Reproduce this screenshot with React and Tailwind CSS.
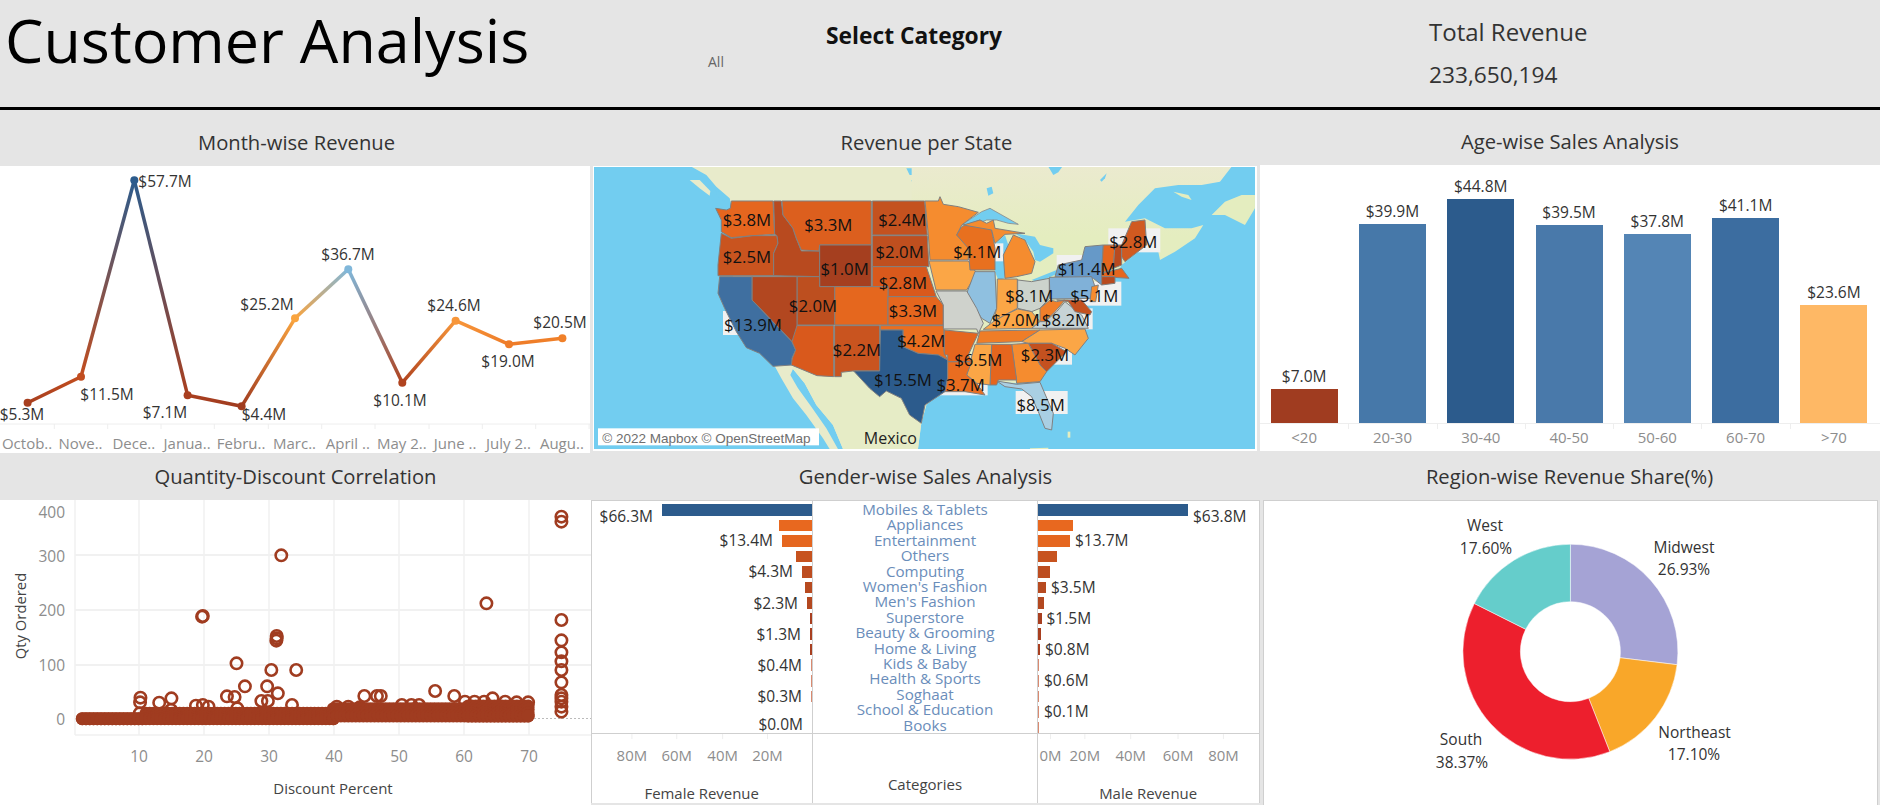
import React from "react";

const T = ({ x, y, children, size = 15.5, fill = "#333", anchor = "middle", ...rest }) => (
  <text x={x} y={y} fontSize={size} fill={fill} textAnchor={anchor} dominantBaseline="central" {...rest}>{children}</text>
);

const Title = ({ children, h }) => (
  <div className={`${h} flex items-center justify-center text-[20.2px] text-[#333] shrink-0`}>{children}</div>
);

/* ---------- Line chart ---------- */
const months = [
  { p: [27.6, 402.7], c: "#a83f1f", tick: "Octob..", l: "$5.3M", lp: [22, 414] },
  { p: [81, 376.7], c: "#c24d1f", tick: "Nove..", l: "$11.5M", lp: [107, 394] },
  { p: [134.3, 180.3], c: "#2c5b8c", tick: "Dece..", l: "$57.7M", lp: [165, 181] },
  { p: [187.6, 395.3], c: "#a93f1f", tick: "Janua..", l: "$7.1M", lp: [165, 412] },
  { p: [241.6, 406.3], c: "#a03c20", tick: "Febru..", l: "$4.4M", lp: [264, 414] },
  { p: [295, 318.3], c: "#f9a43f", tick: "Marc..", l: "$25.2M", lp: [267, 304] },
  { p: [348.3, 269.3], c: "#80b7da", tick: "April ..", l: "$36.7M", lp: [348, 254] },
  { p: [402.3, 382.7], c: "#b0431f", tick: "May 2..", l: "$10.1M", lp: [400, 400] },
  { p: [455.6, 320.7], c: "#f7963a", tick: "June ..", l: "$24.6M", lp: [454, 305] },
  { p: [509, 344.3], c: "#ee7c29", tick: "July 2..", l: "$19.0M", lp: [508, 361] },
  { p: [562.4, 338.3], c: "#f08029", tick: "Augu..", l: "$20.5M", lp: [560, 322] },
];

const LineChart = () => (
  <svg width="590" height="287" viewBox="0 166 590 287" className="block bg-white">
    <defs>
      {months.slice(0, -1).map((m, i) => (
        <linearGradient key={i} id={`seg${i}`} gradientUnits="userSpaceOnUse" x1={m.p[0]} y1={m.p[1]} x2={months[i + 1].p[0]} y2={months[i + 1].p[1]}>
          <stop offset="0" stopColor={m.c} />
          <stop offset="1" stopColor={months[i + 1].c} />
        </linearGradient>
      ))}
    </defs>
    <line x1="0" x2="590" y1="424" y2="424" stroke="#eee" />
    {months.map((m, i) => (
      <line key={i} x1={m.p[0] + 26.7} x2={m.p[0] + 26.7} y1="424" y2="429" stroke="#eee" />
    ))}
    {months.slice(0, -1).map((m, i) => (
      <line key={i} x1={m.p[0]} y1={m.p[1]} x2={months[i + 1].p[0] + 0.01} y2={months[i + 1].p[1]} stroke={`url(#seg${i})`} strokeWidth="3.5" />
    ))}
    {months.map((m, i) => <circle key={i} cx={m.p[0]} cy={m.p[1]} r="4" fill={m.c} />)}
    {months.map((m, i) => <T key={i} x={m.lp[0]} y={m.lp[1]}>{m.l}</T>)}
    {months.map((m, i) => <T key={i} x={m.p[0] - 0.5} y={443} size={15} fill="#8d8d8d">{m.tick}</T>)}
  </svg>
);

/* ---------- Map ---------- */
const west = [
  ["#e5661f", "415,108 540,108 545,208 480,212 415,218 385,200 385,165 368,130 400,135 412,130"],
  ["#c9541f", "385,205 415,220 480,212 552,212 555,235 542,265 542,332 375,332 375,300"],
  ["#b84a1f", "542,108 565,108 570,150 600,190 610,220 625,258 680,258 680,335 542,332 542,265 555,235 552,212 545,208"],
  ["#dc5f1e", "567,108 835,108 835,240 680,240 678,258 625,255 610,220 600,190 570,150"],
  ["#a53f1f", "680,240 835,240 835,365 680,365"],
  ["#c4521f", "838,108 995,108 1003,210 838,210"],
  ["#bf4f1f", "838,212 1003,212 1008,305 838,305"],
  ["#d9591c", "838,305 1000,305 1030,395 885,395 885,365 838,365"],
  ["#e5671e", "725,365 885,365 885,480 725,480"],
  ["#bd4f1f", "612,335 680,335 680,365 725,365 725,480 612,480"],
  ["#b24720", "477,335 612,335 612,505 597,530 477,405"],
  ["#3f6fa0", "380,335 477,335 477,405 597,530 608,555 597,580 598,600 540,604 500,565 460,548 430,500 395,430 375,385"],
  ["#d9591c", "612,482 722,482 722,635 672,632 595,600 598,580 608,555 597,530"],
  ["#c9541f", "725,482 860,482 860,618 780,618 745,622 745,635 725,635"],
  ["#e5661e", "885,395 1030,395 1051,420 1051,480 885,480"],
  ["#ea6e1f", "862,482 1053,482 1053,560 1064,585 1036,570 975,565 930,545 930,495 862,495"],
  ["#2c5b8c", "862,495 930,495 930,545 975,565 1036,570 1064,585 1064,640 1056,680 996,720 985,775 950,750 925,700 880,678 860,695 830,670 782,618 860,618"],
];
const east = [
  ["#f58c2f", "0,108 40,108 45,95 55,118 100,125 160,142 110,180 95,210 130,245 130,285 15,285 10,210"],
  ["#fba646", "12,288 130,288 155,325 125,375 33,375"],
  ["#e8701f", "110,185 165,165 200,195 210,250 210,315 135,315 130,250 95,210"],
  ["#f58c2f", "240,340 235,270 265,210 300,225 330,290 320,325 275,335"],
  ["#f58c2f", "115,180 165,165 185,175 205,165 210,190 300,205 240,208 210,235 200,195"],
  ["#8fc0e0", "150,320 210,320 215,430 195,475 170,460 150,430 125,385"],
  ["#fba646", "217,342 277,342 277,430 240,450 205,470 215,430"],
  ["#ccd3cc", "278,345 320,350 373,340 373,400 345,430 320,440 278,430"],
  ["#cfd2cc", "33,378 125,378 155,430 175,475 160,505 155,492 55,492 55,420"],
  ["#fba646", "175,493 205,470 240,450 278,432 320,440 345,470 320,490"],
  ["#ef7d27", "165,498 345,495 290,530 155,535"],
  ["#f07f2a", "345,430 375,405 395,410 420,405 390,440 360,470 345,470"],
  ["#c7d3d6", "320,490 345,470 360,470 395,440 420,410 470,450 490,490"],
  ["#fba646", "290,530 345,495 480,492 490,520 450,570 420,550 380,535 310,535"],
  ["#c4511f", "310,535 380,535 425,560 365,620 345,600"],
  ["#f58c2f", "260,538 310,535 345,600 365,620 345,650 275,655"],
  ["#a9cfe3", "215,648 275,658 345,652 385,745 380,795 360,790 340,740 320,695 290,672 240,665"],
  ["#e5661e", "200,538 260,538 275,645 220,645 215,660 195,660"],
  ["#fba646", "150,538 200,538 195,660 155,655 125,630"],
  ["#e96d20", "68,590 140,590 125,630 155,655 180,690 120,680 60,680 68,640"],
  ["#e5661e", "58,495 160,505 130,570 140,590 68,590 68,570 58,570"],
  ["#6699c8", "390,335 400,300 470,285 480,245 535,240 530,310 530,360 505,340"],
  ["#80b1d8", "373,337 500,335 510,365 500,400 375,402"],
  ["#f58c2f", "500,365 520,360 512,410 495,410"],
  ["#e5661e", "535,240 570,240 565,310 530,325"],
  ["#b84a1f", "570,240 590,240 590,300 565,310"],
  ["#d05a20", "590,240 620,170 660,165 665,240 600,290 590,275"],
  ["#e5661e", "530,325 590,310 612,340 530,335"],
  ["#b84a1f", "530,335 570,335 570,355 530,360"],
  ["#c4511f", "395,405 470,405 500,440 495,450 450,440 430,410"],
];
const z7 = (x, y) => [593 + x / 3, 165 + y / 3];
const z8 = (x, y) => [925 + x / 3, 165 + y / 3];
const mapLabels = [
  ["$3.8M", z7(462, 162)], ["$3.3M", z7(706, 178)], ["$2.4M", z7(928, 162)], ["$2.5M", z7(462, 273)],
  ["$2.0M", z7(920, 259)], ["$1.0M", z7(755, 310)], ["$2.8M", z7(930, 353)], ["$2.0M", z7(660, 420)],
  ["$13.9M", z7(480, 478)], ["$3.3M", z7(960, 437)], ["$2.2M", z7(792, 552)], ["$4.2M", z7(985, 525)],
  ["$15.5M", z7(930, 642)], ["$4.1M", z8(157, 258)], ["$2.8M", z8(625, 228)], ["$11.4M", z8(485, 310)],
  ["$8.1M", z8(313, 390)], ["$5.1M", z8(508, 390)], ["$7.0M", z8(272, 463)], ["$8.2M", z8(423, 463)],
  ["$6.5M", z8(160, 582)], ["$2.3M", z8(360, 567)], ["$3.7M", z8(107, 658)], ["$8.5M", z8(347, 717)],
];

const Water = "#72cdf0";
const MapChart = () => (
  <svg width="661" height="282" viewBox="594 167 661 282" className="block">
    <defs>
      <linearGradient id="land" x1="0" y1="0" x2="0" y2="1">
        <stop offset="0" stopColor="#ebeacf" />
        <stop offset="0.3" stopColor="#e4edbf" />
        <stop offset="1" stopColor="#e4edc2" />
      </linearGradient>
    </defs>
    <rect x="594" y="167" width="661" height="282" fill={Water} />
    <g transform="translate(593 165) scale(0.3333)">
      <polygon fill="#e8ebcb" points="295,5 340,30 370,65 410,100 420,140 420,350 470,420 500,540 545,603 565,640 600,700 640,750 690,820 710,852 735,852 700,790 655,725 615,670 592,630 600,612 635,655 670,720 720,780 750,852 975,852 985,775 1000,720 1040,680 1060,0" />
      <polygon fill="#e6ecc6" points="600,612 635,655 670,720 720,780 750,852 975,852 985,775 1000,720 1040,680 1040,300 500,300" />
      <polygon fill="#e8ebcb" points="290,45 320,45 352,78 350,92 320,70" />
      <polygon fill={Water} points="365,70 385,85 395,110 375,95" />
      <polygon fill={Water} points="940,10 965,10 970,30 950,30" />
      <polygon fill={Water} points="995,10 1005,10 1012,60 1000,60" />
      <polygon fill={Water} points="955,45 975,50 975,62 960,60" />
    </g>
    <g transform="translate(925 165) scale(0.3333)">
      <polygon fill="url(#land)" points="-40,0 920,5 885,50 830,60 760,60 690,70 640,120 600,170 660,160 720,190 800,190 835,180 810,220 750,260 705,285 700,260 665,240 640,260 590,300 570,335 500,360 470,440 440,540 350,620 340,650 280,655 215,650 160,650 60,670 0,715 -40,720" />
      <polygon fill="#e4edbf" points="990,90 950,90 900,110 860,150 900,150 960,180 990,130" />
      <polygon fill="#e4edbf" points="745,80 790,90 800,105 770,95" />
      <polygon fill={Water} points="370,5 412,5 400,22 385,30" />
      <polygon fill={Water} points="525,45 545,25 540,40 530,50" />
      <polygon fill={Water} points="185,70 200,65 205,85 190,92" />
      <polygon fill={Water} points="110,180 170,140 195,130 280,178 250,175 215,165 185,165 160,175 130,180" stroke="#8b8b8b" strokeWidth="2.5" />
      <polygon fill={Water} points="212,235 240,210 250,240 245,300 238,340 220,345 210,320" />
      <polygon fill={Water} points="270,205 330,215 345,240 385,250 385,265 345,290 330,285 325,260 300,225" />
      <polygon fill={Water} points="320,345 395,315 400,325 340,352" />
      <polygon fill={Water} points="395,300 470,270 470,285 400,310" />
      <polygon fill="#e4edbf" points="315,860 370,860 370,848 315,850" />
      <polygon fill="#e4edbf" points="428,800 436,800 436,818 428,818" />
    </g>
    <g fill="#f1f1f1">
      <rect x={z7(390, 0)[0]} y={z7(0, 438)[1]} width="60" height="24" />
      <rect x={z8(85, 0)[0]} y={z8(0, 235)[1]} width="50" height="18" />
      <rect x={z8(550, 0)[0]} y={z8(0, 190)[1]} width="52" height="24" />
      <rect x={z8(395, 0)[0]} y={z8(0, 270)[1]} width="52" height="24" />
      <rect x={z8(430, 0)[0]} y={z8(0, 350)[1]} width="53" height="24" />
      <rect x={z8(350, 0)[0]} y={z8(0, 430)[1]} width="51" height="21" />
      <rect x={z8(285, 0)[0]} y={z8(0, 530)[1]} width="52" height="23" />
      <rect x={z8(272, 0)[0]} y={z8(0, 678)[1]} width="52" height="23" />
      <rect x={z8(35, 0)[0]} y={z8(0, 625)[1]} width="51" height="22" />
    </g>
    <g transform="translate(593 165) scale(0.3333)" stroke="#808080" strokeWidth="3" strokeLinejoin="round">
      {west.map(([c, p], i) => <polygon key={i} fill={c} points={p} />)}
    </g>
    <g transform="translate(925 165) scale(0.3333)" stroke="#808080" strokeWidth="3" strokeLinejoin="round">
      {east.map(([c, p], i) => <polygon key={i} fill={c} points={p} />)}
    </g>
    <rect x={z7(15, 0)[0]} y={z7(0, 790)[1]} width="221" height="17" fill="#fff" />
    <T x={z7(28, 0)[0]} y={z7(0, 820)[1]} size={13.5} fill="#6e6e6e" anchor="start" fontFamily="'Liberation Sans', sans-serif">© 2022 Mapbox © OpenStreetMap</T>
    <T x={z7(892, 0)[0]} y={438} size={16} fill="#222">Mexico</T>
    {mapLabels.map(([t, p], i) => <T key={i} x={p[0]} y={p[1]} size={16.8} fill="#111">{t}</T>)}
  </svg>
);

/* ---------- Age bars ---------- */
const ages = [
  ["<20", "$7.0M", 34, "#a03c20"], ["20-30", "$39.9M", 199, "#4678a9"], ["30-40", "$44.8M", 224, "#2c5b8c"],
  ["40-50", "$39.5M", 198, "#4979aa"], ["50-60", "$37.8M", 189, "#5485b5"], ["60-70", "$41.1M", 205, "#3c6da0"],
  [">70", "$23.6M", 118, "#feb865"],
];
const AgeChart = () => (
  <div className="flex flex-col h-full bg-white">
    <div className="flex h-[258px] shrink-0">
      {ages.map(([a, l, h, c]) => (
        <div key={a} className="w-[88.3px] flex flex-col items-center justify-end">
          <div className="h-[20px] mb-[3px] leading-[20px] text-[15.5px] text-[#333]">{l}</div>
          <div className="w-[67px]" style={{ height: h, background: c }} />
        </div>
      ))}
    </div>
    <div className="flex h-[28px] border-t border-[#eee]">
      {ages.map(([a], i) => (
        <div key={a} className="relative w-[88.3px] flex items-center justify-center text-[15px] text-[#8d8d8d]">
          {i > 0 && <span className="absolute left-0 top-0 h-[5px] border-l border-[#eee]" />}
          {a}
        </div>
      ))}
    </div>
  </div>
);

/* ---------- Scatter ---------- */
const S = (x, y) => [x / 2.613, 450 + y / 3];
const outliers = [
  [735,316],[1271,460],[528,500],[530,498],[723,558],[722,572],[723,565],[618,640],[709,660],[774,660],[640,709],[698,709],[726,730],
  [593,739],[613,741],[367,743],[366,757],[416,758],[448,745],[447,780],[952,738],[985,738],[995,738],[1137,723],[1187,738],[1287,745],
  [683,753],[700,753],[763,765],[512,767],[530,765],[545,770],[620,775],[1467,200],[1467,215],[1467,510],[1467,571],[1467,607],[1467,634],
  [1467,660],[1467,697],[1467,735],[1467,745],[1467,755],[1467,770],[1467,785],[1050,765],[1075,765],[1095,765],[1215,755],[1240,755],
  [1265,755],[1320,755],[1350,757],[1380,757],[365,790],[880,770],[910,770],[940,772],
];
const band = [];
for (let i = 0; i < 120; i++) {
  const zx = 215 + (i * (1380 - 215)) / 119;
  const top = zx < 380 ? 806 : zx < 870 ? 790 : zx < 1215 ? 776 : 768;
  const bottom = zx < 880 ? 806 : 798;
  for (let y = top; y <= bottom; y += 10) band.push([zx, y]);
  band.push([zx, bottom]);
}
const ScatterChart = () => (
  <svg width="591" height="305" viewBox="0 500 591 305" className="block bg-white">
    {[139, 204, 269, 334, 399, 464, 529].map((x, i) => (
      <g key={x}>
        <line x1={x} x2={x} y1="500" y2="735" stroke="#f1f1f1" strokeWidth="1.5" />
        <T x={x} y={756} size={15.5} fill="#8d8d8d">{(i + 1) * 10}</T>
      </g>
    ))}
    <line x1="75" x2="75" y1="500" y2="735" stroke="#f1f1f1" strokeWidth="1.5" />
    <line x1="75" x2="591" y1="735" y2="735" stroke="#f1f1f1" strokeWidth="1.5" />
    {[555, 610, 665].map((y) => <line key={y} x1="75" x2="591" y1={y} y2={y} stroke="#f1f1f1" strokeWidth="2" />)}
    <line x1="530" x2="591" y1="718.5" y2="718.5" stroke="#bbb" strokeDasharray="2 2" />
    {[["400", 512], ["300", 556], ["200", 610], ["100", 665], ["0", 719]].map(([t, y]) => (
      <T key={t} x={65} y={y} size={15.5} fill="#8d8d8d" anchor="end">{t}</T>
    ))}
    <T x={20} y={616} size={14.8} fill="#444" transform="rotate(-90 20 616)">Qty Ordered</T>
    <T x={333} y={788} size={15} fill="#444">Discount Percent</T>
    {outliers.map(([x, y], i) => {
      const [cx, cy] = S(x, y);
      return <circle key={i} cx={cx} cy={cy} r="5.7" fill="none" stroke="#a03c20" strokeWidth="2.6" />;
    })}
    {band.map(([x, y], i) => {
      const [cx, cy] = S(x, y);
      return <circle key={i} cx={cx} cy={cy} r="6.5" fill="#a03c20" />;
    })}
  </svg>
);

/* ---------- Gender ---------- */
const cats = [
  ["Mobiles & Tablets", 150, 150, "$66.3M", "$63.8M", "#2c5b8c"],
  ["Appliances", 33, 35, "", "", "#e8681f"],
  ["Entertainment", 30, 32, "$13.4M", "$13.7M", "#e5661f"],
  ["Others", 16, 19, "", "", "#c7531f"],
  ["Computing", 10, 12, "$4.3M", "", "#bd4d20"],
  ["Women's Fashion", 7.5, 8, "", "$3.5M", "#b74a20"],
  ["Men's Fashion", 5, 6, "$2.3M", "", "#b34820"],
  ["Superstore", 2, 3.5, "", "$1.5M", "#a83f20"],
  ["Beauty & Grooming", 2, 3, "$1.3M", "", "#a83f20"],
  ["Home & Living", 2, 2, "", "$0.8M", "#a83f20"],
  ["Kids & Baby", 1, 1, "$0.4M", "", "#d98a70"],
  ["Health & Sports", 1, 1, "", "$0.6M", "#d98a70"],
  ["Soghaat", 1, 1, "$0.3M", "", "#d98a70"],
  ["School & Education", 0, 1, "", "$0.1M", "#d98a70"],
  ["Books", 0, 1, "$0.0M", "", "#d98a70"],
];
const shift = (i) => (i === 0 ? "translate-y-[6.5px]" : i === 14 ? "-translate-y-[3px]" : "");
const Gender = () => (
  <div className="w-[669px] flex flex-col bg-white border-x border-[#cfcfcf] shrink-0">
    <div className="h-[234px] flex border-y border-[#cfcfcf] shrink-0">
      <div className="w-[221px] pt-[1px] border-r border-[#cfcfcf]">
        {cats.map(([n, f, , l, , c], i) => (
          <div key={n} className="h-[15.55px] flex items-center justify-end gap-[9px]">
            {l && <span className={`text-[15.5px] leading-[15px] text-[#333] ${shift(i)}`}>{l}</span>}
            <div className="h-[11.5px]" style={{ width: f, background: c }} />
          </div>
        ))}
      </div>
      <div className="w-[224px] pt-[1px] flex flex-col items-center">
        {cats.map(([n]) => (
          <div key={n} className="h-[15.55px] leading-[15px] text-[15.2px] text-[#6a8dba] whitespace-nowrap">{n}</div>
        ))}
      </div>
      <div className="flex-1 pt-[1px] border-l border-[#cfcfcf]">
        {cats.map(([n, , m, , r, c], i) => (
          <div key={n} className="h-[15.55px] flex items-center justify-start gap-[5px]">
            <div className="h-[11.5px]" style={{ width: m, background: c }} />
            {r && <span className={`text-[15.5px] leading-[15px] text-[#333] ${shift(i)}`}>{r}</span>}
          </div>
        ))}
      </div>
    </div>
    <div className="flex-1 flex">
      <svg width="221" height="69" viewBox="592 735 221 69" className="block border-r border-[#cfcfcf] box-content">
        {[["80M", 632], ["60M", 677], ["40M", 723], ["20M", 768]].map(([t, x]) => (
          <g key={t}>
            <line x1={x} x2={x} y1="735" y2="740" stroke="#eee" />
            <T x={x} y={756} size={15} fill="#8d8d8d">{t}</T>
          </g>
        ))}
        <T x={702} y={794} size={15} fill="#444">Female Revenue</T>
      </svg>
      <div className="w-[224px] flex items-start justify-center pt-[41px] text-[15px] leading-[18px] text-[#444]">Categories</div>
      <svg width="222" height="69" viewBox="1038 735 222 69" className="block border-l border-[#cfcfcf] box-content">
        {[["0M", 1050.5], ["20M", 1085], ["40M", 1131], ["60M", 1178.5], ["80M", 1224]].map(([t, x]) => (
          <g key={t}>
            <line x1={x} x2={x} y1="735" y2="740" stroke="#eee" />
            <T x={x} y={756} size={15} fill="#8d8d8d">{t}</T>
          </g>
        ))}
        <T x={1148.5} y={794} size={15} fill="#444">Male Revenue</T>
      </svg>
    </div>
  </div>
);

/* ---------- Donut ---------- */
const slices = [[26.93, "#a5a3d5"], [17.1, "#f9a729"], [38.37, "#ed1f2d"], [17.6, "#65cdcb"]];
const cx = 1570.4, cy = 651.7, R = 107.5, r0 = 50;
const pol = (rad, a) => [cx + rad * Math.sin(a), cy - rad * Math.cos(a)];
let acc = 0;
const arcs = slices.map(([v, c]) => {
  const a0 = acc, a1 = acc + (v / 100) * Math.PI * 2;
  acc = a1;
  const large = a1 - a0 > Math.PI ? 1 : 0;
  const [x0, y0] = pol(R, a0), [x1, y1] = pol(R, a1), [x2, y2] = pol(r0, a1), [x3, y3] = pol(r0, a0);
  return { c, d: `M${x0} ${y0}A${R} ${R} 0 ${large} 1 ${x1} ${y1}L${x2} ${y2}A${r0} ${r0} 0 ${large} 0 ${x3} ${y3}Z` };
});
const Donut = () => (
  <svg width="614" height="305" viewBox="1264 501 614 305" className="block">
    {arcs.map((a, i) => <path key={i} d={a.d} fill={a.c} stroke="#fff" strokeWidth="0.5" />)}
    {[["West", 1485, 525], ["17.60%", 1486, 548], ["Midwest", 1684, 547], ["26.93%", 1684, 569], ["Northeast", 1694.6, 732], ["17.10%", 1694, 754], ["South", 1461, 739], ["38.37%", 1462, 762]].map(([t, x, y]) => (
      <T key={t} x={x} y={y}>{t}</T>
    ))}
  </svg>
);

export default function App() {
  return (
    <div className="w-[1880px] h-[805px] overflow-hidden bg-[#e5e5e5] font-['Open_Sans',sans-serif] flex flex-col">
      <header className="h-[110px] shrink-0 flex border-b-[3px] border-black box-border">
        <div className="w-[708px] pl-[5px]">
          <h1 className="text-[61px] leading-[80px] text-black font-normal whitespace-nowrap">Customer Analysis</h1>
        </div>
        <div className="w-[721px] pt-[20px]">
          <div className="ml-[118px] text-[22.8px] leading-[32px] font-bold text-[#111]">Select Category</div>
          <div className="text-[14px] leading-[20px] text-[#666]">All</div>
        </div>
        <div className="pt-[15px]">
          <div className="text-[24px] leading-[34px] text-[#333]">Total Revenue</div>
          <div className="mt-[11px] text-[22.7px] leading-[30px] text-[#333]">233,650,194</div>
        </div>
      </header>
      <div className="h-[343px] shrink-0 flex">
        <section className="w-[593px] shrink-0 flex flex-col">
          <Title h="h-[56px] pt-[8px]">Month-wise Revenue</Title>
          <div className="w-[590px]"><LineChart /></div>
        </section>
        <section className="w-[667px] shrink-0 flex flex-col">
          <Title h="h-[56px] pt-[8px]">Revenue per State</Title>
          <div className="w-[664px] h-[285px] bg-white pl-[1px] pt-[1px]"><MapChart /></div>
        </section>
        <section className="flex-1 flex flex-col">
          <Title h="h-[55px] pt-[8px]">Age-wise Sales Analysis</Title>
          <div className="h-[286px]"><AgeChart /></div>
        </section>
      </div>
      <div className="flex-1 flex min-h-0">
        <section className="w-[591px] shrink-0 flex flex-col">
          <Title h="h-[47px]">Quantity-Discount Correlation</Title>
          <ScatterChart />
        </section>
        <section className="w-[672px] shrink-0 flex flex-col">
          <Title h="h-[47px]"><span className="mr-[3px]">Gender-wise Sales Analysis</span></Title>
          <Gender />
        </section>
        <section className="flex-1 flex flex-col">
          <Title h="h-[47px]"><span className="mr-[4px]">Region-wise Revenue Share(%)</span></Title>
          <div className="w-[615px] flex-1 bg-white border border-[#cfcfcf]"><Donut /></div>
        </section>
      </div>
    </div>
  );
}
